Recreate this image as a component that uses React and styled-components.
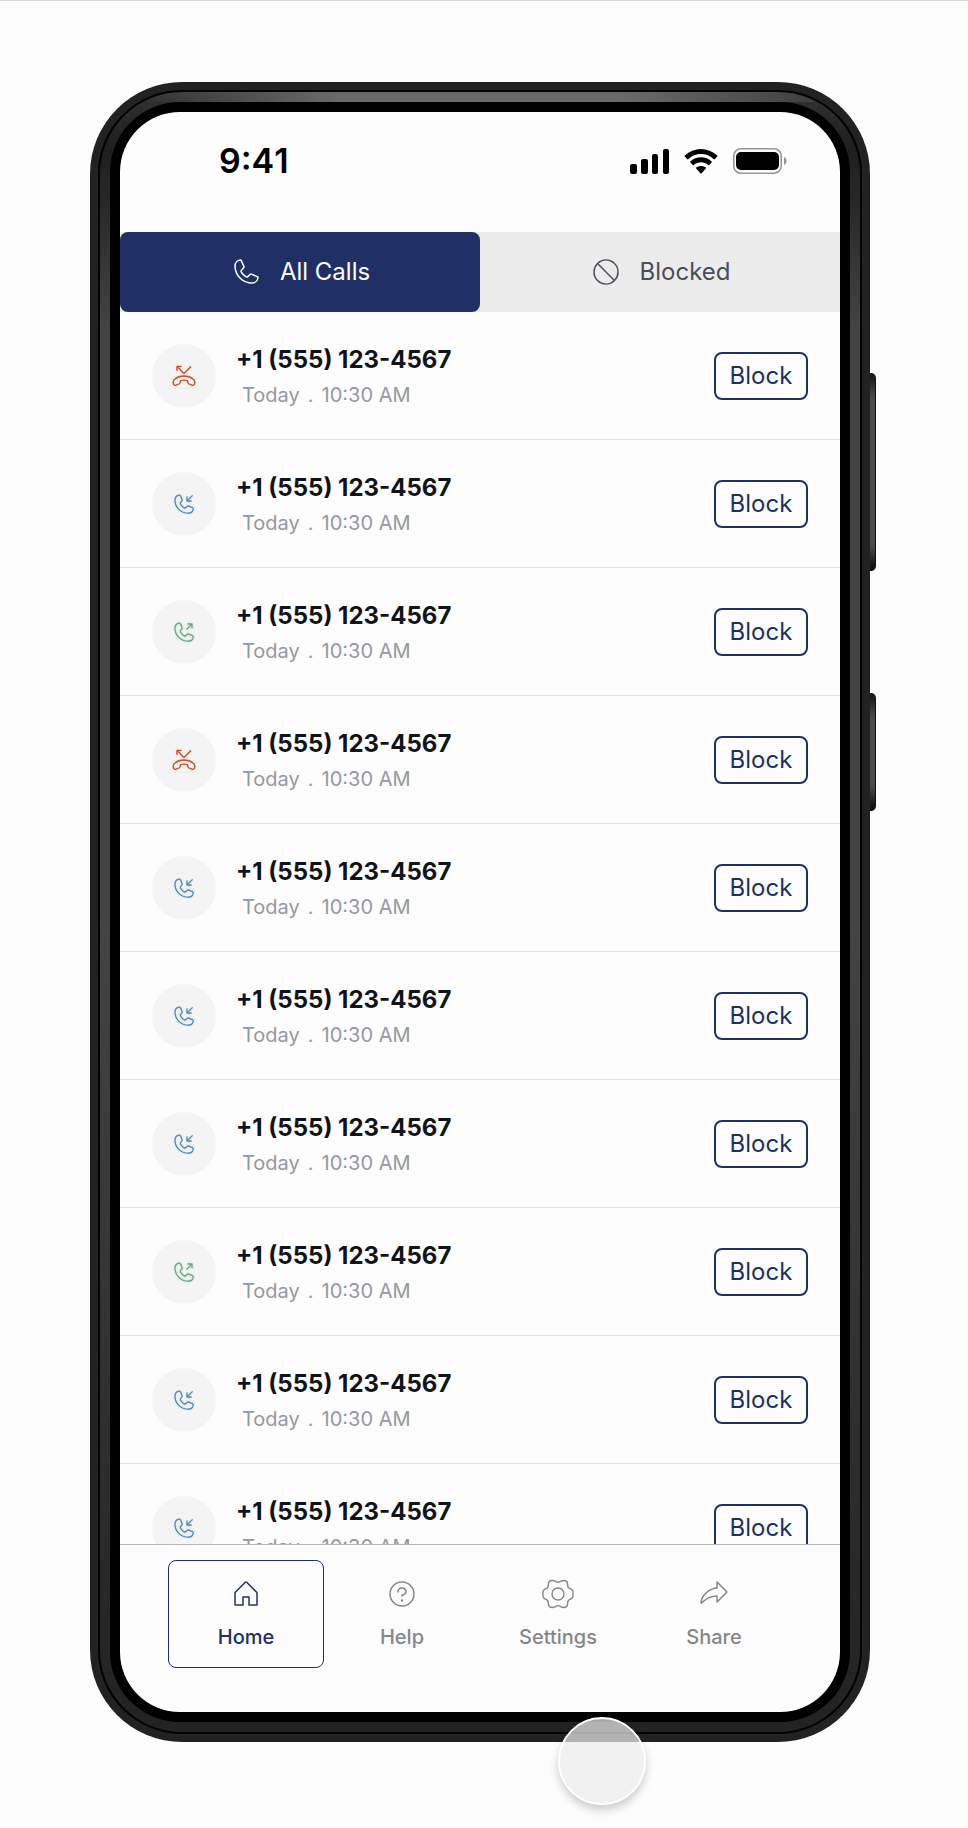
import styled, { createGlobalStyle } from "styled-components"
import { useState } from "react"
import {
  PiPhoneLight,
  PiProhibitLight,
  PiHouseLight,
  PiQuestionLight,
  PiShareFatLight,
} from "react-icons/pi"

const GlobalStyle = createGlobalStyle`
  * {
    box-sizing: border-box;
  }

  body {
    margin: 0;
    background: #fdfdfd;
    font-family: Inter, "Liberation Sans", sans-serif;
  }

  button {
    font-family: inherit;
    cursor: pointer;
  }
`

const Page = styled.div`
  min-height: 100vh;
  padding: 81px 16px 86px;
  border-top: 1px solid #d8d8d8;

  display: flex;
  justify-content: center;
  align-items: flex-start;
`

const Device = styled.div`
  width: 100%;
  max-width: 788px;
  position: relative;

  display: flex;
`

const Shell = styled.div`
  flex: 1;
  min-width: 0;
  padding: 8px;
  border-radius: 92px;
  background: #222222;
`

const Seam = styled.div`
  padding: 2px;
  border-radius: 84px;
  background: #020202;
`

const Rim = styled.div`
  padding: 10px;
  border-radius: 82px;
  background:
    linear-gradient(90deg, transparent 40px, #6a6a6a 240px, #6a6a6a calc(100% - 240px), #4a4a4a calc(100% - 90px), transparent) top / 100% 10px no-repeat,
    linear-gradient(180deg, #333333 0, #1e1e1e 60px, #444444 240px, #444444 50%, #222222 100%);
`

const Glass = styled.div`
  padding: 10px;
  border-radius: 70px;
  background: #000000;
`

const Screen = styled.div`
  aspect-ratio: 9 / 20;
  border-radius: 60px;
  background: #fdfdfd;
  overflow: hidden;

  display: flex;
  flex-direction: column;
`

const SideKeys = styled.div`
  width: 8px;
  padding-top: 291px;

  display: flex;
  flex-direction: column;
  gap: 122px;
`

const SideKey = styled.span`
  width: 6px;
  height: ${(props) => props.$height}px;
  border-right: 1px solid #111111;
  border-radius: 0 5px 5px 0;
  background: linear-gradient(180deg, #111111, #4a4a4a 24px, #4a4a4a calc(100% - 24px), #050505);
`

const StatusBar = styled.header`
  height: 120px;
  padding: 28px 53px 0 99px;
  flex-shrink: 0;

  display: flex;
  justify-content: space-between;
  align-items: flex-start;
`

const Clock = styled.time`
  font-size: 34px;
  font-weight: 600;
  font-kerning: none;
  line-height: 42px;
  color: #000000;
`

const StatusIcons = styled.div`
  height: 42px;

  display: flex;
  align-items: center;
  gap: 15px;
`

const Tabs = styled.div`
  flex-shrink: 0;
  background: #ececec;

  display: grid;
  grid-template-columns: 1fr 1fr;
`

const Tab = styled.button`
  height: 80px;
  border: 0;
  border-radius: 8px;
  background: ${(props) => (props.$active ? "#203066" : "transparent")};
  color: ${(props) => (props.$active ? "#ffffff" : "#4a4e5a")};
  font-size: 24px;
  font-weight: 400;
  line-height: 32px;

  display: flex;
  justify-content: center;
  align-items: center;
  gap: 18px;
`

const CallList = styled.ul`
  flex: 1;
  min-height: 0;
  margin: 0;
  padding: 0;
  list-style: none;
  overflow: hidden;
`

const CallRow = styled.li`
  height: 128px;
  padding: 0 32px;
  border-bottom: 1px solid #e2e2e4;

  display: flex;
  align-items: center;
`

const Avatar = styled.div`
  width: 64px;
  height: 64px;
  border-radius: 50%;
  background: #f4f4f4;

  display: flex;
  justify-content: center;
  align-items: center;
`

const CallInfo = styled.div`
  flex: 1;
  margin-left: 20px;
  padding-top: 3px;

  display: flex;
  flex-direction: column;
  gap: 3px;
`

const PhoneNumber = styled.span`
  font-size: 24px;
  font-weight: 700;
  line-height: 32px;
  color: #12131a;
`

const CallTime = styled.span`
  padding-left: 6px;
  font-size: 20px;
  font-weight: 400;
  line-height: 32px;
  color: #97989f;

  display: flex;
  gap: 8px;
`

const BlockButton = styled.button`
  min-width: 94px;
  height: 48px;
  padding: 0 10px;
  border: 2px solid #203066;
  border-radius: 8px;
  background: transparent;
  color: #203066;
  font-size: 24px;
  font-weight: 400;
  line-height: 32px;
`

const NavBar = styled.nav`
  height: 168px;
  flex-shrink: 0;
  padding: 15px 48px 0;
  border-top: 1px solid #b4b5b8;

  display: grid;
  grid-template-columns: repeat(4, 1fr);
  align-items: start;
`

const NavButton = styled.button`
  height: 108px;
  padding: 0 0 2px;
  border: 1px solid ${(props) => (props.$active ? "#203066" : "transparent")};
  border-radius: 8px;
  background: transparent;
  color: ${(props) => (props.$active ? "#203066" : "#85868c")};
  font-size: 20px;
  font-weight: 500;
  line-height: 24px;

  display: flex;
  flex-direction: column;
  justify-content: center;
  align-items: center;
  gap: 15px;
`

const TouchPoint = styled.span`
  position: absolute;
  left: 468px;
  bottom: -63px;
  width: 88px;
  height: 88px;
  border: 2px solid #ffffff;
  border-radius: 50%;
  background: rgba(235, 235, 235, 0.72);
  box-shadow: 0 5px 10px rgba(0, 0, 0, 0.2);
`

const handset =
  "M6.6 3.2C7.4 2.9 8 3.1 8.4 3.9L10 7.2C10.4 8 10.2 8.7 9.6 9.3L8.6 10.4C8.2 10.9 8.2 11.4 8.5 12C9.4 13.8 10.6 15 12.4 15.8C13 16.1 13.5 16 13.9 15.6L15 14.5C15.6 14 16.3 13.9 17 14.2L20.4 15.7C21.2 16.1 21.4 16.7 21.2 17.5C20.6 19.8 18.6 21.2 16 21.2C9 21.2 3 15.2 3 8.4C3 5.8 4.3 3.9 6.6 3.2Z"

const callTypes = {
  missed: {
    color: "#b4553a",
    glow: "#fbe8e0",
    label: "Missed call",
    paths: [
      "M5 2.5L12 9.5L19 2.5",
      "M5 7V2.5H9.5",
      "M2 20.6C.6 18.6 1 16.6 3 15C8 11 16 11 21 15C23 16.6 23.4 18.6 22 20.6C21.6 21.3 21 21.5 20.2 21.2L17 20C16.3 19.7 15.9 19.2 15.8 18.4L15.5 16.8C13.2 16 10.8 16 8.5 16.8L8.2 18.4C8.1 19.2 7.7 19.7 7 20L3.8 21.2C3 21.5 2.4 21.3 2 20.6Z",
    ],
  },
  incoming: {
    color: "#5a80b8",
    glow: "#e6f2f6",
    label: "Incoming call",
    paths: [handset, "M20.6 3.4L15 9", "M15 4.4V9H19.6"],
  },
  outgoing: {
    color: "#7a9a88",
    glow: "#dcf4e4",
    label: "Outgoing call",
    paths: [handset, "M14.6 9.4L20 4", "M15.4 4H20V8.6"],
  },
}

const calls = [
  "missed",
  "incoming",
  "outgoing",
  "missed",
  "incoming",
  "incoming",
  "incoming",
  "outgoing",
  "incoming",
  "incoming",
]

function CallIcon({ type }) {
  const { color, glow, label, paths } = callTypes[type]

  return (
    <svg width="24" height="24" viewBox="0 0 24 24" fill="none" role="img" aria-label={label}>
      {paths.map((d) => (
        <path key={"glow" + d} d={d} stroke={glow} strokeWidth="4" strokeLinejoin="round" />
      ))}
      {paths.map((d) => (
        <path key={d} d={d} stroke={color} strokeWidth="1.3" strokeLinejoin="round" />
      ))}
    </svg>
  )
}

// one quarter of the outline, mirrored into the other three
function Gear({ size }) {
  const quarter =
    "M0-11.6C2-11.6 3.4-13.5 5.6-13.5C8.4-13.5 9.6-12 9.6-9.8C9.6-7.2 9.6-6.4 11.4-5.6C13.6-4.8 15-4 15-2V0"

  return (
    <svg width={size} height={size} viewBox="-16 -16 32 32" fill="none" stroke="currentColor" strokeWidth="1.4" aria-hidden="true">
      <path d={quarter} />
      <path d={quarter} transform="scale(-1 1)" />
      <path d={quarter} transform="scale(1 -1)" />
      <path d={quarter} transform="scale(-1 -1)" />
      <circle r="6" />
    </svg>
  )
}

function Signal() {
  return (
    <svg width="39" height="25" viewBox="0 0 39 25" aria-hidden="true">
      <rect x="0" y="15" width="7" height="10" rx="2" />
      <rect x="11" y="10" width="7" height="15" rx="2" />
      <rect x="22" y="5" width="6" height="20" rx="2" />
      <rect x="33" y="0" width="6" height="25" rx="2" />
    </svg>
  )
}

function Wifi() {
  return (
    <svg width="34" height="25" viewBox="0 0 17 12.5" aria-hidden="true">
      <path d="M8.5 2.5C10.9 2.5 13.2 3.4 14.9 5.1C15 5.2 15.2 5.2 15.4 5.1L16.6 3.8C16.8 3.7 16.8 3.4 16.6 3.3C12.1-1.1 4.9-1.1.4 3.3C.2 3.4.2 3.7.4 3.8L1.6 5.1C1.8 5.2 2 5.2 2.1 5.1C3.8 3.4 6.1 2.5 8.5 2.5Z" />
      <path d="M8.5 6.6C9.8 6.6 11.1 7.1 12.1 8C12.2 8.2 12.4 8.2 12.6 8L13.8 6.8C14 6.6 14 6.4 13.8 6.2C10.8 3.4 6.2 3.4 3.2 6.2C3 6.4 3 6.6 3.2 6.8L4.4 8C4.6 8.2 4.8 8.2 4.9 8C5.9 7.1 7.2 6.6 8.5 6.6Z" />
      <path d="M11 9.3C11.1 9.5 11.1 9.7 10.9 9.8L8.8 12.1C8.6 12.3 8.4 12.3 8.2 12.1L6.1 9.8C5.9 9.7 5.9 9.5 6.1 9.3C7.5 8.2 9.5 8.2 11 9.3Z" />
    </svg>
  )
}

function Battery() {
  return (
    <svg width="54" height="26" viewBox="0 0 54 26" aria-hidden="true">
      <rect x="0.8" y="0.8" width="47.4" height="24.4" rx="7" fill="none" stroke="#98989a" strokeWidth="1.6" />
      <rect x="3" y="4" width="43" height="18" rx="5" />
      <path d="M51 9C54.5 10.5 54.5 15.5 51 17Z" fill="#98989a" />
    </svg>
  )
}

const tabs = [
  { name: "All Calls", Icon: PiPhoneLight },
  { name: "Blocked", Icon: PiProhibitLight },
]

const navItems = [
  { name: "Home", Icon: PiHouseLight },
  { name: "Help", Icon: PiQuestionLight },
  { name: "Settings", Icon: Gear },
  { name: "Share", Icon: PiShareFatLight },
]

function App() {
  const [tab, setTab] = useState("All Calls")
  const [page, setPage] = useState("Home")

  return (
    <Page>
      <GlobalStyle />
      <Device>
        <Shell>
          <Seam>
            <Rim>
              <Glass>
                <Screen>
                  <StatusBar>
                    <Clock>9:41</Clock>
                    <StatusIcons>
                      <Signal />
                      <Wifi />
                      <Battery />
                    </StatusIcons>
                  </StatusBar>
                  <Tabs>
                    {tabs.map(({ name, Icon }) => (
                      <Tab key={name} $active={tab === name} onClick={() => setTab(name)}>
                        <Icon size={32} />
                        {name}
                      </Tab>
                    ))}
                  </Tabs>
                  <CallList>
                    {calls.map((type, index) => (
                      <CallRow key={index}>
                        <Avatar>
                          <CallIcon type={type} />
                        </Avatar>
                        <CallInfo>
                          <PhoneNumber>+1 (555) 123-4567</PhoneNumber>
                          <CallTime>
                            <span>Today</span>
                            <span>.</span>
                            <span>10:30 AM</span>
                          </CallTime>
                        </CallInfo>
                        <BlockButton>Block</BlockButton>
                      </CallRow>
                    ))}
                  </CallList>
                  <NavBar>
                    {navItems.map(({ name, Icon }) => (
                      <NavButton key={name} $active={page === name} onClick={() => setPage(name)}>
                        <Icon size={32} />
                        {name}
                      </NavButton>
                    ))}
                  </NavBar>
                </Screen>
              </Glass>
            </Rim>
          </Seam>
        </Shell>
        <SideKeys>
          <SideKey $height={198} />
          <SideKey $height={118} />
        </SideKeys>
        <TouchPoint />
      </Device>
    </Page>
  )
}

export default App
